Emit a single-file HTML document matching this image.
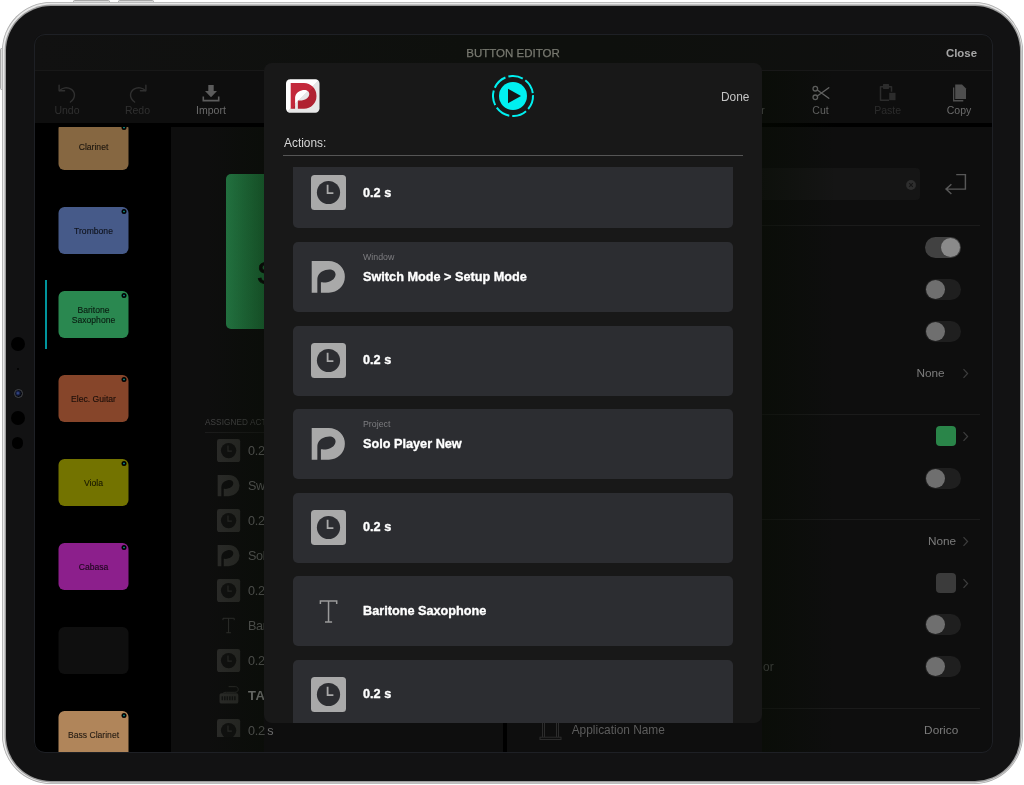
<!DOCTYPE html>
<html lang="en">
<head>
<meta charset="utf-8">
<title>Button Editor</title>
<style>
*{box-sizing:border-box;margin:0;padding:0}
html,body{width:1024px;height:785px;overflow:hidden;background:#fff}
body{position:relative;font-family:"Liberation Sans",sans-serif;-webkit-font-smoothing:antialiased}
.abs{position:absolute}
.t{position:absolute;white-space:nowrap;line-height:16px;height:16px}
/* device */
#hwbtn1,#hwbtn2,#hwbtn3{position:absolute;background:#dcdcdc;border:0.700px solid #a9a9a9;border-radius:1.500px}
#hwbtn1{left:73.300px;top:0.300px;width:36.700px;height:4px}
#hwbtn2{left:117.500px;top:0.300px;width:36.200px;height:4px}
#hwbtn3{left:0.300px;top:48.300px;width:4px;height:42px}
#frame{left:2px;top:2px;width:1021px;height:782px;border-radius:49px;background:#e9e9e9;box-shadow:inset 0 0 0 0.8px #adadad}
#bezel{left:6px;top:6px;width:1014px;height:775px;border-radius:45px;background:#121213;box-shadow:0 0 0 1.400px #9c9c9c}
.sensor{position:absolute;border-radius:50%;background:#000}
#screen{left:34px;top:34px;width:959px;height:718px;border-radius:10px;background:#0e0e0e;overflow:hidden;will-change:transform}
#screenborder{left:33.500px;top:34px;width:959.700px;height:719px;border-radius:11px;border:1.500px solid #1e2025;pointer-events:none}
/* inside screen: coordinates relative to screen (subtract 34) */
#titlebar{left:0;top:0;width:959px;height:37px;background:linear-gradient(90deg,#111111,#0e100d 45%,#0e100d 60%,#101010);border-bottom:1px solid #181818}
#toolbar{left:0;top:37px;width:959px;height:52px;background:#0e0e0e}
#blackband{left:0;top:89px;width:959px;height:4px;background:#000}
#sidebar{left:0;top:93px;width:137px;height:625px;background:#000;overflow:hidden}
#vdivider{left:469px;top:93px;width:4px;height:625px;background:#000}
.tile{position:absolute;left:24px;transform:translateX(0.500px);width:70px;height:47px;border-radius:6px;font-size:8.600px;color:rgba(0,0,0,0.78);-webkit-text-stroke:0.150px rgba(0,0,0,0.6);display:flex;align-items:center;justify-content:center;text-align:center;line-height:10px}
.tile i{position:absolute;right:1.900px;top:1.900px;width:5.200px;height:5.200px;border-radius:50%;background:radial-gradient(circle,#0b9690 0,#087a76 0.500px,#000 1.300px)}
.tb{position:absolute;font-size:10.5px;text-align:center;width:60px;line-height:14px;height:14px}
/* right panel */
.sep{position:absolute;height:1px;background:#1b1b1b}
.tog{position:absolute;left:891px;width:36px;height:21px;border-radius:11px;background:#1f1f1f}
.tog i{position:absolute;left:1px;top:1px;width:19px;height:19px;border-radius:50%;background:#6f6f6f}
.tog.on{background:#414141}
.tog.on i{left:16px;background:#8a8a8a}
.chev{position:absolute;left:928px;width:7px;height:11px}
.val{color:#7c7c7c;font-size:11.800px}
/* middle list */
.ml{position:absolute;left:214px;word-spacing:-0.600px;letter-spacing:-0.300px;font-size:12.600px;color:#6a6a6a;line-height:16px;height:16px;white-space:nowrap}
.mi{position:absolute;left:183.400px;width:23.200px;height:23.200px;margin-top:0.400px}
/* modal */
#modal{left:230px;top:29px;width:498px;height:660px;border-radius:8px;background:#181818;overflow:hidden}
.cell{position:absolute;left:29px;width:440px;height:70px;border-radius:5px;background:#2c2d31}
.cell .ic{position:absolute;left:17.500px;top:17.300px;width:35px;height:35px}
.cell b{position:absolute;left:70px;font-size:12.700px;color:#fff;font-weight:bold;white-space:nowrap;line-height:16px;height:16px;-webkit-text-stroke:0.35px #fff}
.cell small{position:absolute;left:70px;font-size:8.800px;color:#7d7d80;white-space:nowrap;line-height:10px;height:10px}
</style>
</head>
<body>
<div id="hwbtn1"></div><div id="hwbtn2"></div><div id="hwbtn3"></div>
<div id="frame" class="abs"></div>
<div id="bezel" class="abs"></div>
<div class="sensor" style="left:11px;top:337px;width:14px;height:14px"></div>
<div class="sensor" style="left:17px;top:368px;width:2px;height:2px"></div>
<div class="sensor" style="left:13.500px;top:389.200px;width:9px;height:9px;border:1px solid #45474c;background:radial-gradient(circle at 42% 45%,#3f559c 0,#162047 1.800px,#05070d 3.200px)"></div>
<div class="sensor" style="left:11px;top:411px;width:14px;height:14px"></div>
<div class="sensor" style="left:12px;top:437.300px;width:11.400px;height:11.400px"></div>

<div id="screen" class="abs">
  <div id="titlebar" class="abs"></div>
  <div id="toolbar" class="abs"></div>
  <div id="sidebar" class="abs">
  <div class="tile" style="top:-4px;background:#866741">Clarinet<i></i></div>
  <div class="tile" style="top:80px;background:#465a89">Trombone<i></i></div>
  <div class="tile" style="top:164px;background:#2a8850">Baritone<br>Saxophone<i></i></div>
  <div class="tile" style="top:248px;background:#86452a">Elec. Guitar<i></i></div>
  <div class="tile" style="top:332px;background:#737300">Viola<i></i></div>
  <div class="tile" style="top:416px;background:#8c1f8c">Cabasa<i></i></div>
  <div class="tile" style="top:500px;background:#0f0f0f"></div>
  <div class="tile" style="top:584px;background:#b0855a">Bass Clarinet<i></i></div>
  <div class="abs" style="left:11px;top:153px;width:2px;height:69px;background:#00949c"></div></div>
  <div id="blackband" class="abs"></div>
  <div id="vdivider" class="abs"></div>
  <div class="t" id="ttl" style="left:379px;width:200px;text-align:center;top:11px;font-size:11.500px;color:#787970;-webkit-text-stroke:0.250px #787970">BUTTON EDITOR</div>
  <div class="t" id="close" style="right:16px;top:11px;font-size:11.400px;font-weight:bold;color:#a6a6a6">Close</div>
  <div class="abs" style="left:21px;top:48px;width:24px;height:22px;color:#303030"><svg width="24" height="22" viewBox="0 0 24 22" fill="none" stroke="currentColor" stroke-width="1.4" stroke-linecap="round" stroke-linejoin="round"><path d="M4.100 3.200V8.700H9.600"/><path d="M4.600 8.500C7.500 5.600 12.200 4.700 16 7.200C20.600 10.200 20.800 15.800 15.400 20"/></svg></div><div class="tb" style="left:3px;top:69px;color:#303030">Undo</div>
  <div class="abs" style="left:91.5px;top:48px;width:24px;height:22px;color:#303030"><svg width="24" height="22" viewBox="0 0 24 22" fill="none" stroke="currentColor" stroke-width="1.4" stroke-linecap="round" stroke-linejoin="round"><path d="M19.900 3.200V8.700H14.400"/><path d="M19.400 8.500C16.500 5.600 11.800 4.700 8 7.200C3.400 10.200 3.200 15.800 8.600 20"/></svg></div><div class="tb" style="left:73.5px;top:69px;color:#303030">Redo</div>
  <div class="abs" style="left:165px;top:48px;width:24px;height:22px;color:#5c5c5c"><svg width="24" height="22" viewBox="0 0 24 22" fill="currentColor"><path d="M9.300 3h5.400v6h3.300l-6 6.200-6-6.200h3.300z"/><path d="M3.500 14.500h1.600v3.300h13.800v-3.300h1.600v4.900h-17z"/></svg></div><div class="tb" style="left:147px;top:69px;color:#6b6b6b">Import</div>
  <div class="abs" style="left:703px;top:48px;width:24px;height:22px;color:#6b6b6b"></div><div class="tb" style="left:688.2px;top:69px;color:#6b6b6b">Clear</div>
  <div class="abs" style="left:774.5px;top:48px;width:24px;height:22px;color:#6b6b6b"><svg width="24" height="22" viewBox="0 0 24 22" fill="none" stroke="currentColor" stroke-width="1.300" stroke-linecap="round"><circle cx="6.300" cy="6.700" r="2.300"/><circle cx="6.300" cy="15.300" r="2.300"/><path d="M8.300 8l11.500 8.300M8.300 14l11.500-8.300"/></svg></div><div class="tb" style="left:756.5px;top:69px;color:#6b6b6b">Cut</div>
  <div class="abs" style="left:841.7px;top:48px;width:24px;height:22px;color:#2c2c2c"><svg width="24" height="22" viewBox="0 0 24 22" fill="none" stroke="currentColor" stroke-width="1.500" stroke-linejoin="round"><path d="M13 18.200h-8.500v-13.500h11v5"/><rect x="7.700" y="2.700" width="4.600" height="3.600" fill="currentColor"/><rect x="13.200" y="10.800" width="6.300" height="7.400" fill="currentColor" stroke="none"/></svg></div><div class="tb" style="left:823.7px;top:69px;color:#2c2c2c">Paste</div>
  <div class="abs" style="left:913px;top:48px;width:24px;height:22px;color:#4e4e4e"><svg width="24" height="22" viewBox="0 0 24 22" fill="currentColor"><path d="M8.200 2.500h6.800l4 4v10.500h-10.800z"/><path d="M6 5.500h1.300v12.400h9v1.600h-10.300z"/></svg></div><div class="tb" style="left:895px;top:69px;color:#6b6b6b">Copy</div>
  
  <div class="abs" style="left:191.7px;top:140px;width:223px;height:155px;border-radius:5px;background:linear-gradient(90deg,#27824a,#1f7a3d 40px,#1f7a3d);color:#0a0a0a;font-size:32px;line-height:37px;-webkit-text-stroke:0.700px #0a0a0a"><span class="abs" style="left:52px;top:44px">Baritone</span><span class="abs" style="left:31px;top:81px">Saxophone</span></div>
  <div class="t" style="left:171px;top:380.800px;font-size:8.200px;color:#474747;letter-spacing:0.100px">ASSIGNED ACTIONS</div>
  <div class="sep" style="left:171px;top:397.900px;width:290px;background:#1c1c1c"></div>
  <div class="abs" style="left:0;top:93px;width:469px;height:610.3px;overflow:hidden"><svg class="mi" style="top:311.5px" viewBox="0 0 35 35"><rect width="35" height="35" rx="3.500" fill="#2d2d2b"/><circle cx="17.500" cy="17.500" r="11.600" fill="#111"/><path d="M16.600 9.700V18.200H22.400" fill="none" stroke="#2d2d2b" stroke-width="1.800"/></svg>
    <div class="ml" style="top:315.5px">0.2 s</div>
    <svg class="mi" style="top:346.5px" viewBox="0 0 35 35"><path fill="#2d2d2b" fill-rule="evenodd" d="M1 1.500H18A16 16 0 0 1 18 33.500H1Z M6.600 33.500V19.500C6.600 15 9.500 11.500 15 9.700C20.500 8 24.800 10 24.600 14.500C24.300 19.500 18 23.300 10.200 22.300V33.500Z"/></svg>
    <div class="ml" style="top:350.5px">Switch Mode</div>
    <svg class="mi" style="top:381.5px" viewBox="0 0 35 35"><rect width="35" height="35" rx="3.500" fill="#2d2d2b"/><circle cx="17.500" cy="17.500" r="11.600" fill="#111"/><path d="M16.600 9.700V18.200H22.400" fill="none" stroke="#2d2d2b" stroke-width="1.800"/></svg>
    <div class="ml" style="top:385.5px">0.2 s</div>
    <svg class="mi" style="top:416.5px" viewBox="0 0 35 35"><path fill="#2d2d2b" fill-rule="evenodd" d="M1 1.500H18A16 16 0 0 1 18 33.500H1Z M6.600 33.500V19.500C6.600 15 9.500 11.500 15 9.700C20.500 8 24.800 10 24.600 14.500C24.300 19.500 18 23.300 10.200 22.300V33.500Z"/></svg>
    <div class="ml" style="top:420.5px">Solo Player New</div>
    <svg class="mi" style="top:451.5px" viewBox="0 0 35 35"><rect width="35" height="35" rx="3.500" fill="#2d2d2b"/><circle cx="17.500" cy="17.500" r="11.600" fill="#111"/><path d="M16.600 9.700V18.200H22.400" fill="none" stroke="#2d2d2b" stroke-width="1.800"/></svg>
    <div class="ml" style="top:455.5px">0.2 s</div>
    <svg class="mi" style="top:486.5px" viewBox="0 0 35 35" fill="none" stroke="#333331" stroke-width="1.500"><path d="M9 9.300V6.500H26V9.300M17.500 6.500V28.300M14 28.300H21"/></svg>
    <div class="ml" style="top:490.5px">Baritone Saxophone</div>
    <svg class="mi" style="top:521.5px" viewBox="0 0 35 35"><rect width="35" height="35" rx="3.500" fill="#2d2d2b"/><circle cx="17.500" cy="17.500" r="11.600" fill="#111"/><path d="M16.600 9.700V18.200H22.400" fill="none" stroke="#2d2d2b" stroke-width="1.800"/></svg>
    <div class="ml" style="top:525.5px">0.2 s</div>
    <svg class="mi" style="top:556.5px" viewBox="0 0 35 35" fill="none" stroke="#2d2d2b" stroke-width="1.500"><path d="M17.500 4H27.500C30.500 4 32 6 32 8.300C32 10.800 30 12.500 27 12.500H14C10.500 12.500 9 13.500 8.700 15.500"/><rect x="3.800" y="13.800" width="28.400" height="15.800" rx="2.800" fill="#2d2d2b" stroke="none"/><path d="M8 18.500V24.500M11.800 18.500V24.500M15.600 18.500V24.500M19.400 18.500V24.500M23.200 18.500V24.500M27 18.500V24.500" stroke="#141414" stroke-width="2.200"/></svg>
    <div class="ml" style="top:560.5px;font-weight:bold;color:#8f8f8f;letter-spacing:0.400px;font-size:13px">TAB</div>
    <svg class="mi" style="top:591.5px" viewBox="0 0 35 35"><rect width="35" height="35" rx="3.500" fill="#2d2d2b"/><circle cx="17.500" cy="17.500" r="11.600" fill="#111"/><path d="M16.600 9.700V18.200H22.400" fill="none" stroke="#2d2d2b" stroke-width="1.800"/></svg>
    <div class="ml" style="top:595.5px">0.2 s</div></div>
  <div class="abs" style="left:506px;top:134px;width:379.5px;height:32px;border-radius:4px;background:#151515"></div>
  <svg class="abs" style="left:871.5px;top:145.6px" width="10" height="10" viewBox="0 0 10 10"><circle cx="5" cy="5" r="4.900" fill="#2e2e2e"/><path d="M3.200 3.200l3.600 3.600M6.800 3.200l-3.600 3.600" stroke="#151515" stroke-width="1.100"/></svg>
  <svg class="abs" style="left:909px;top:138px" width="26" height="24" viewBox="0 0 26 24" fill="none" stroke="#575757" stroke-width="1.450"><path d="M13.200 2.600H22.400V17.100H3.200M8.400 12.200L3 17.100L8.400 22"/></svg>
  <div class="sep" style="left:506px;top:190.7px;width:439.5px"></div>
  <div class="sep" style="left:506px;top:380.2px;width:439.5px"></div>
  <div class="sep" style="left:506px;top:485.1px;width:439.5px"></div>
  <div class="sep" style="left:506px;top:673.5px;width:439.5px"></div>
  <div class="tog on" style="top:202.8px"><i></i></div>
  <div class="tog" style="top:244.8px"><i></i></div>
  <div class="tog" style="top:286.9px"><i></i></div>
  <div class="tog" style="top:433.5px"><i></i></div>
  <div class="tog" style="top:580.0px"><i></i></div>
  <div class="tog" style="top:622.0px"><i></i></div>
  <div class="t val" style="left:882.4px;top:331.4px">None</div>
  <svg class="chev" style="top:333.9px" viewBox="0 0 7 11" fill="none" stroke="#3d3d3d" stroke-width="1.200"><path d="M1.500 1.200L5.600 5.500L1.500 9.800"/></svg>
  <div class="t val" style="left:893.9px;top:499.2px">None</div>
  <svg class="chev" style="top:501.7px" viewBox="0 0 7 11" fill="none" stroke="#3d3d3d" stroke-width="1.200"><path d="M1.500 1.200L5.600 5.500L1.500 9.800"/></svg>
  <div class="abs" style="left:902px;top:392px;width:20px;height:20px;border-radius:4px;background:#2a8549"></div>
  <svg class="chev" style="top:396.5px" viewBox="0 0 7 11" fill="none" stroke="#3d3d3d" stroke-width="1.200"><path d="M1.500 1.200L5.600 5.500L1.500 9.800"/></svg>
  <div class="abs" style="left:902px;top:539px;width:20px;height:20px;border-radius:4px;background:#3b3b3b"></div>
  <svg class="chev" style="top:543.5px" viewBox="0 0 7 11" fill="none" stroke="#3d3d3d" stroke-width="1.200"><path d="M1.500 1.200L5.600 5.500L1.500 9.800"/></svg>
  <div class="t" style="right:219.4px;top:624.9px;font-size:11.900px;color:#5c5c5c">Use Custom Text Col<span style="margin-left:1.600px">or</span></div>
  <svg class="abs" style="left:505px;top:684px" width="23" height="23" viewBox="0 0 23 23" fill="none" stroke="#2c2c2c" stroke-width="1"><path d="M3.500 0V19M5.500 0V19M17.500 0V19M19.500 0V19"/><rect x="1" y="19.200" width="21" height="2.300"/></svg>
  <div class="t" style="left:537.7px;top:688px;font-size:11.900px;color:#5c5c5c">Application Name</div>
  <div class="t val" style="right:34.8px;top:688px">Dorico</div>
  <div class="abs" style="left:728px;top:37px;width:75px;height:681px;background:linear-gradient(90deg,rgba(6,12,2,0.5),rgba(6,12,2,0))"></div>
  <div class="abs" style="left:170px;top:93px;width:60px;height:625px;background:linear-gradient(270deg,rgba(6,12,2,0.4),rgba(6,12,2,0))"></div>
  <div id="modal" class="abs">
  <svg class="abs" style="left:22px;top:16px" width="34" height="34" viewBox="0 0 34 34"><defs><linearGradient id="gw" x1="0" y1="0" x2="1" y2="1"><stop offset="0.5" stop-color="#ffffff"/><stop offset="0.5" stop-color="#e7e7e7"/></linearGradient><linearGradient id="gr" x1="0" y1="0" x2="1" y2="1"><stop offset="0.52" stop-color="#c3293b"/><stop offset="0.52" stop-color="#b02131"/></linearGradient></defs><rect x="0" y="0.200" width="33.500" height="33.600" rx="4.200" fill="url(#gw)"/><path transform="translate(4.700 4) scale(0.770 0.795)" fill="url(#gr)" fill-rule="evenodd" d="M0 0H17.250A16.250 16.250 0 0 1 17.250 32.500H0Z M5.700 32.500V19C5.700 14.500 8.500 11 14 9.300C19.500 7.600 24.300 9.600 24.100 14.100C23.800 19.100 17.500 22.900 9.300 21.900V32.500Z"/></svg>
  <svg class="abs" style="left:225px;top:9px" width="48" height="48" viewBox="-24 -24 48 48"><circle r="20" fill="none" stroke="#00f0f0" stroke-width="2" stroke-dasharray="14.950 3.002" transform="rotate(-2.500)"/><circle r="14" fill="#00f0f0"/><path d="M-5 -7.200L8 0L-5 7.200Z" fill="#161616"/></svg>
  <div class="t" style="right:12.600px;top:25.700px;font-size:11.900px;color:#c4c4c4">Done</div>
  <div class="t" style="left:20px;top:71.500px;font-size:11.900px;color:#d6d6d6">Actions:</div>
  <div class="abs" style="left:19px;top:91.600px;width:460px;height:1px;background:#555"></div>
  <div class="abs" id="scroll" style="left:0;top:104px;width:498px;height:556px;overflow:hidden">
  <div class="cell" style="top:-8.900px"><svg class="ic" viewBox="0 0 35 35"><rect width="35" height="35" rx="3.500" fill="#a9a9a9"/><circle cx="17.500" cy="17.500" r="11.600" fill="#2c2d31"/><path d="M16.600 9.700V18.200H22.400" fill="none" stroke="#a9a9a9" stroke-width="1.800"/></svg><b style="top:26.800px">0.2 s</b></div>
  <div class="cell" style="top:75.2px"><svg class="ic" viewBox="0 0 35 35"><path fill="#a9a9a9" fill-rule="evenodd" transform="translate(0.700 1.900) scale(0.990 0.980)" d="M0 0H17.250A16.250 16.250 0 0 1 17.250 32.500H0Z M5.700 32.500V19C5.700 14.500 8.500 11 14 9.300C19.500 7.600 24.300 9.600 24.100 14.100C23.800 19.100 17.500 22.900 9.300 21.900V32.500Z"/></svg><small style="top:9.500px">Window</small><b style="top:26.800px">Switch Mode &gt; Setup Mode</b></div>
  <div class="cell" style="top:158.7px"><svg class="ic" viewBox="0 0 35 35"><rect width="35" height="35" rx="3.500" fill="#a9a9a9"/><circle cx="17.500" cy="17.500" r="11.600" fill="#2c2d31"/><path d="M16.600 9.700V18.200H22.400" fill="none" stroke="#a9a9a9" stroke-width="1.800"/></svg><b style="top:26.800px">0.2 s</b></div>
  <div class="cell" style="top:242.2px"><svg class="ic" viewBox="0 0 35 35"><path fill="#a9a9a9" fill-rule="evenodd" transform="translate(0.700 1.900) scale(0.990 0.980)" d="M0 0H17.250A16.250 16.250 0 0 1 17.250 32.500H0Z M5.700 32.500V19C5.700 14.500 8.500 11 14 9.300C19.500 7.600 24.300 9.600 24.100 14.100C23.800 19.100 17.500 22.900 9.300 21.900V32.500Z"/></svg><small style="top:9.500px">Project</small><b style="top:26.800px">Solo Player New</b></div>
  <div class="cell" style="top:325.7px"><svg class="ic" viewBox="0 0 35 35"><rect width="35" height="35" rx="3.500" fill="#a9a9a9"/><circle cx="17.500" cy="17.500" r="11.600" fill="#2c2d31"/><path d="M16.600 9.700V18.200H22.400" fill="none" stroke="#a9a9a9" stroke-width="1.800"/></svg><b style="top:26.800px">0.2 s</b></div>
  <div class="cell" style="top:409.2px"><svg class="ic" viewBox="0 0 35 35" fill="none" stroke="#9b9b9b" stroke-width="1.500"><path d="M9.400 11V8.100H25.700V11M17.550 8.100V29M14 29H21.100"/></svg><b style="top:26.800px">Baritone Saxophone</b></div>
  <div class="cell" style="top:492.7px"><svg class="ic" viewBox="0 0 35 35"><rect width="35" height="35" rx="3.500" fill="#a9a9a9"/><circle cx="17.500" cy="17.500" r="11.600" fill="#2c2d31"/><path d="M16.600 9.700V18.200H22.400" fill="none" stroke="#a9a9a9" stroke-width="1.800"/></svg><b style="top:26.800px">0.2 s</b></div>
  </div>
  </div>
</div>
<div id="screenborder" class="abs"></div>
</body>
</html>
